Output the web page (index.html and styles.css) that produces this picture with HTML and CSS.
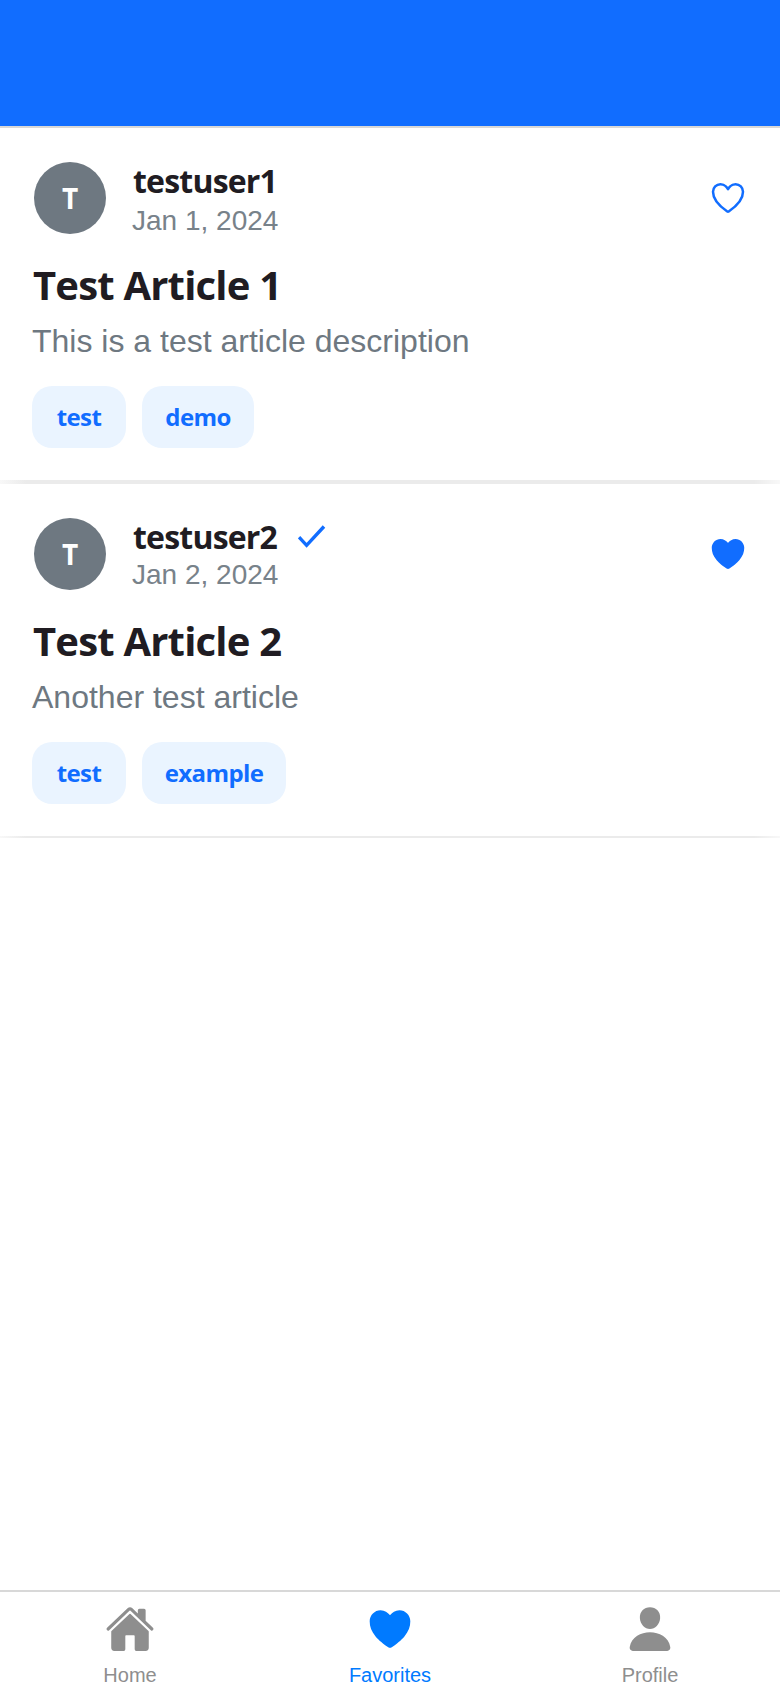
FILE: index.html
```
<!DOCTYPE html>
<html lang="en">
<head>
<meta charset="utf-8">
<title>Favorites</title>
<link rel="stylesheet" href="styles.css">
</head>
<body>
<header class="header"></header>
<main class="feed">
  <article class="card">
    <div class="author">
      <div class="avatar">T</div>
      <div class="info">
        <div class="name-row"><span class="name">testuser1</span></div>
        <div class="date">Jan 1, 2024</div>
      </div>
      <svg class="heart" viewBox="0 0 512 512"><path fill="none" stroke="currentColor" stroke-width="32" stroke-linecap="round" stroke-linejoin="round" d="M352.92 80C288 80 256 144 256 144s-32-64-96.92-64c-52.76 0-94.54 44.14-95.08 96.81-1.1 109.33 86.73 187.08 183 252.42a16 16 0 0018 0c96.26-65.34 184.09-143.09 183-252.42-.54-52.67-42.32-96.81-95.08-96.81z"/></svg>
    </div>
    <h2 class="title">Test Article 1</h2>
    <p class="description">This is a test article description</p>
    <div class="tags"><span class="tag tag-test">test</span><span class="tag tag-demo">demo</span></div>
  </article>
  <div class="divider"></div>
  <article class="card">
    <div class="author">
      <div class="avatar">T</div>
      <div class="info info-verified">
        <div class="name-row"><span class="name">testuser2</span>
          <svg class="check" viewBox="0 0 28 24"><path fill="none" stroke="currentColor" stroke-width="3.4" d="M1 12.2L8.6 20.3L26 1.5"/></svg>
        </div>
        <div class="date">Jan 2, 2024</div>
      </div>
      <svg class="heart" viewBox="0 0 512 512"><path fill="currentColor" d="M256 448a32 32 0 01-18-5.57c-78.59-53.35-112.62-89.93-131.39-112.8-40-48.75-59.15-98.8-58.61-153C48.63 114.52 98.46 64 159.08 64c44.08 0 74.61 24.83 92.39 45.51a6 6 0 009.06 0C278.31 88.81 308.84 64 352.92 64c60.62 0 110.45 50.52 111.08 112.64.54 54.21-18.63 104.26-58.61 153-18.77 22.87-52.8 59.45-131.39 112.8A32 32 0 01256 448z"/></svg>
    </div>
    <h2 class="title">Test Article 2</h2>
    <p class="description">Another test article</p>
    <div class="tags"><span class="tag tag-test">test</span><span class="tag tag-example">example</span></div>
  </article>
  <div class="divider divider-last"></div>
</main>
<nav class="tabs">
  <a class="tab">
    <svg class="tab-icon" viewBox="0 0 512 512"><path fill="currentColor" d="M261.56 101.28a8 8 0 00-11.06 0L66.4 277.15a8 8 0 00-2.47 5.79L63.9 448a32 32 0 0032 32H192a16 16 0 0016-16V328a8 8 0 018-8h80a8 8 0 018 8v136a16 16 0 0016 16h96.06a32 32 0 0032-32V282.94a8 8 0 00-2.47-5.79z"/><path fill="currentColor" d="M490.91 244.15l-74.8-71.56V64a16 16 0 00-16-16h-48a16 16 0 00-16 16v32l-57.92-55.38C272.77 35.14 264.71 32 256 32c-8.68 0-16.72 3.14-22.14 8.63l-212.7 203.5c-6.22 6-7 15.87-1.34 22.37A16 16 0 0043 267.56L250.5 69.28a8 8 0 0111.06 0l207.52 198.28a16 16 0 0022.59-.44c6.14-6.36 5.63-16.86-.76-22.97z"/></svg>
    <span>Home</span>
  </a>
  <a class="tab tab-active">
    <svg class="tab-icon" viewBox="0 0 512 512"><path fill="currentColor" d="M256 448a32 32 0 01-18-5.57c-78.59-53.35-112.62-89.93-131.39-112.8-40-48.75-59.15-98.8-58.61-153C48.63 114.52 98.46 64 159.08 64c44.08 0 74.61 24.83 92.39 45.51a6 6 0 009.06 0C278.31 88.81 308.84 64 352.92 64c60.62 0 110.45 50.52 111.08 112.64.54 54.21-18.63 104.26-58.61 153-18.77 22.87-52.8 59.45-131.39 112.8A32 32 0 01256 448z"/></svg>
    <span>Favorites</span>
  </a>
  <a class="tab">
    <svg class="tab-icon" viewBox="0 0 512 512"><path fill="currentColor" d="M332.64 64.58C313.18 43.57 286 32 256 32c-30.16 0-57.43 11.5-76.8 32.38-19.58 21.11-29.12 49.8-26.88 80.78C156.76 206.28 203.27 256 256 256s99.16-49.71 103.67-110.82c2.27-30.7-7.33-59.33-27.03-80.6zM432 480H80a31 31 0 01-24.2-11.13c-6.5-7.77-9.12-18.38-7.18-29.11C57.06 392.94 83.4 353.61 124.8 326c36.78-24.51 83.37-38 131.2-38s94.42 13.5 131.2 38c41.4 27.6 67.74 66.93 76.18 113.75 1.94 10.73-.68 21.34-7.18 29.11A31 31 0 01432 480z"/></svg>
    <span>Profile</span>
  </a>
</nav>
</body>
</html>
```
FILE: styles.css
```
* { box-sizing: border-box; }
body {
  margin: 0;
  height: 1688px;
  display: flex;
  flex-direction: column;
  background: #fff;
  font-family: "Liberation Sans", Arial, sans-serif;
  overflow: hidden;
}
.header { height: 128px; flex: none; background: #116dff; border-bottom: 2px solid #d8d8d8; }
.feed { flex: 1; }
.card { height: 352px; padding: 32px; background: #fff; }
.author { height: 76px; display: flex; align-items: center; margin-bottom: 21px; }
.avatar {
  width: 72px; height: 72px; margin: 0 26px 0 2px;
  display: flex; align-items: center; justify-content: center;
  border-radius: 50%; background: #6e7881; color: #fff;
  font: 700 28px/36px "Open Sans", sans-serif;
}
.info { flex: 1; height: 78px; }
.info-verified .date { margin-top: -2px; }
.name-row { display: flex; align-items: center; height: 44px; }
.name { width: 145px; padding-left: 1px; font: 700 32px/44px "Open Sans", sans-serif; color: #201c22; letter-spacing: -0.8px; }
.check { width: 28px; height: 24px; margin-left: 21px; color: #116dff; }
.date { font-size: 28px; line-height: 36px; color: #78828a; }
.heart { width: 40px; height: 40px; color: #116dff; }
.title { margin: 0 0 6px; padding-left: 1px; font: 700 40px/56px "Open Sans", sans-serif; color: #201c22; letter-spacing: -0.8px; }
.description { margin: 0 0 23px; font-size: 32px; line-height: 44px; color: #6e7881; }
.tags { display: flex; gap: 16px; }
.tag {
  height: 62px; display: flex; align-items: center; justify-content: center;
  border-radius: 20px; background: #eaf4ff; color: #116dff;
  font: 700 24px/32px "Open Sans", sans-serif; letter-spacing: -0.6px;
}
.tag-test { width: 94px; }
.tag-demo { width: 112px; }
.tag-example { width: 144px; }
.divider { height: 4px; background: linear-gradient(90deg, #f8f8f8, #ebebeb 26px, #ebebeb calc(100% - 26px), #f8f8f8); }
.divider-last { height: 2px; }
.tabs { height: 98px; flex: none; display: flex; border-top: 2px solid #d8d8d8; background: #fff; }
.tab { flex: 1; display: flex; flex-direction: column; align-items: center; padding-top: 12px; gap: 9px; color: #8e8e8e; font-size: 20px; line-height: 24px; }
.tab-active { color: #007aff; }
.tab-icon { width: 50px; height: 50px; flex: none; }
```
